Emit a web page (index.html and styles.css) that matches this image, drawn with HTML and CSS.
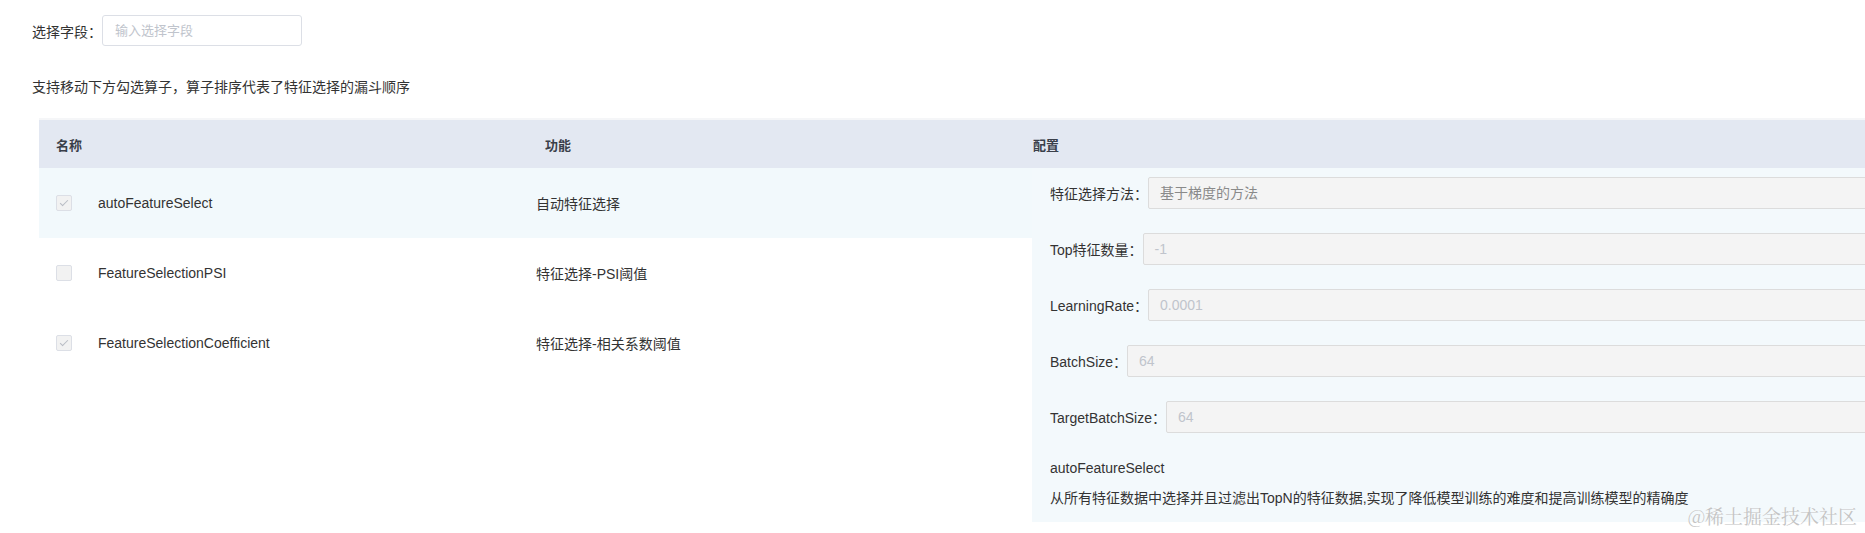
FILE: index.html
```html
<!DOCTYPE html>
<html lang="zh-CN">
<head>
    <meta charset="UTF-8">
    <title>特征选择</title>
    <link rel="stylesheet" href="styles.css">
</head>
<body>
<div class="page">
    <div class="field-row">
        <label for="field">选择字段：</label>
        <input class="search" id="field" type="text" placeholder="输入选择字段">
    </div>
    <p class="hint">支持移动下方勾选算子，算子排序代表了特征选择的漏斗顺序</p>
    <div class="table">
        <div class="head">
            <div class="th">名称</div>
            <div class="th">功能</div>
            <div class="th">配置</div>
        </div>
        <div class="body">
            <div class="rows">
                <div class="row active">
                    <div class="cell name"><span class="check on"></span>autoFeatureSelect</div>
                    <div class="cell func">自动特征选择</div>
                </div>
                <div class="row">
                    <div class="cell name"><span class="check"></span>FeatureSelectionPSI</div>
                    <div class="cell func">特征选择-PSI阈值</div>
                </div>
                <div class="row">
                    <div class="cell name"><span class="check on"></span>FeatureSelectionCoefficient</div>
                    <div class="cell func">特征选择-相关系数阈值</div>
                </div>
            </div>
            <div class="panel">
                <div class="item">
                    <label>特征选择方法：</label>
                    <div class="input value">基于梯度的方法</div>
                </div>
                <div class="item">
                    <label>Top特征数量：</label>
                    <div class="input">-1</div>
                </div>
                <div class="item">
                    <label>LearningRate：</label>
                    <div class="input">0.0001</div>
                </div>
                <div class="item">
                    <label>BatchSize：</label>
                    <div class="input">64</div>
                </div>
                <div class="item">
                    <label>TargetBatchSize：</label>
                    <div class="input">64</div>
                </div>
                <div class="title">autoFeatureSelect</div>
                <div class="desc">从所有特征数据中选择并且过滤出TopN的特征数据,实现了降低模型训练的难度和提高训练模型的精确度</div>
            </div>
        </div>
    </div>
</div>
<div class="watermark">@稀土掘金技术社区</div>
</body>
</html>
```

FILE: styles.css
```css
html, body {
    overflow: hidden;
}

body {
    margin: 0;
    background: #fff;
    color: #333;
    font-family: "Liberation Sans", "Noto Sans CJK SC", sans-serif;
    font-size: 14px;
}

.page {
    padding: 15px 0 0 32px;
}

.field-row {
    display: flex;
    align-items: center;
    height: 31px;
}

.search {
    box-sizing: border-box;
    width: 200px;
    height: 31px;
    padding: 0 12px;
    border: 1px solid #dcdfe6;
    border-radius: 3px;
    font-family: inherit;
    font-size: 13px;
    outline: none;
}

.search::placeholder {
    color: #c0c4cc;
}

.hint {
    margin: 30px 0 0;
    line-height: 22px;
}

.table {
    margin: 22px 0 0 7px;
    width: 2000px;
    box-shadow: 0 -2px 0 #f5f6f8;
}

.head {
    display: grid;
    grid-template-columns: 489px 488px 1fr;
    height: 48px;
    align-items: center;
    background: #e3e8f2;
}

.th {
    padding-left: 17px;
    font-size: 13px;
    font-weight: 700;
    color: #3a3f4a;
}

.body {
    display: flex;
}

.rows {
    width: 993px;
}

.row {
    display: grid;
    grid-template-columns: 489px 504px;
    height: 70px;
    align-items: center;
}

.row.active {
    background: #f2f9fc;
}

.cell.name {
    display: flex;
    align-items: center;
    padding-left: 17px;
}

.cell.func {
    padding-left: 8px;
}

.check {
    position: relative;
    box-sizing: border-box;
    width: 16px;
    height: 16px;
    margin-right: 26px;
    border: 1px solid #dcdfe6;
    border-radius: 2px;
    background: #f2f2f2;
}

.check.on::after {
    content: "";
    position: absolute;
    left: 5px;
    top: 2px;
    width: 3px;
    height: 7px;
    border: solid #b8bcc4;
    border-width: 0 1px 1px 0;
    transform: rotate(45deg);
}

.panel {
    flex: 1;
    padding: 9px 0 13px 18px;
    background: #f3f9fc;
}

.item {
    display: flex;
    align-items: center;
    margin-bottom: 24px;
}

.item label {
    white-space: nowrap;
}

.input {
    flex: 1;
    box-sizing: border-box;
    height: 32px;
    line-height: 30px;
    padding: 0 11px;
    border: 1px solid #dcdcdc;
    border-radius: 2px;
    background: #f4f4f4;
    color: #c0c4cc;
}

.input.value {
    color: #8a8a8a;
}

.title {
    margin-top: 4px;
    line-height: 22px;
}

.desc {
    margin-top: 8px;
    line-height: 22px;
}

.watermark {
    position: absolute;
    right: 8px;
    bottom: 4px;
    font-family: "Noto Serif CJK SC", "Liberation Serif", "Noto Sans CJK SC", serif;
    font-size: 19px;
    color: #c4c4c4;
    text-shadow: 0 0 2px #fff;
}
```
